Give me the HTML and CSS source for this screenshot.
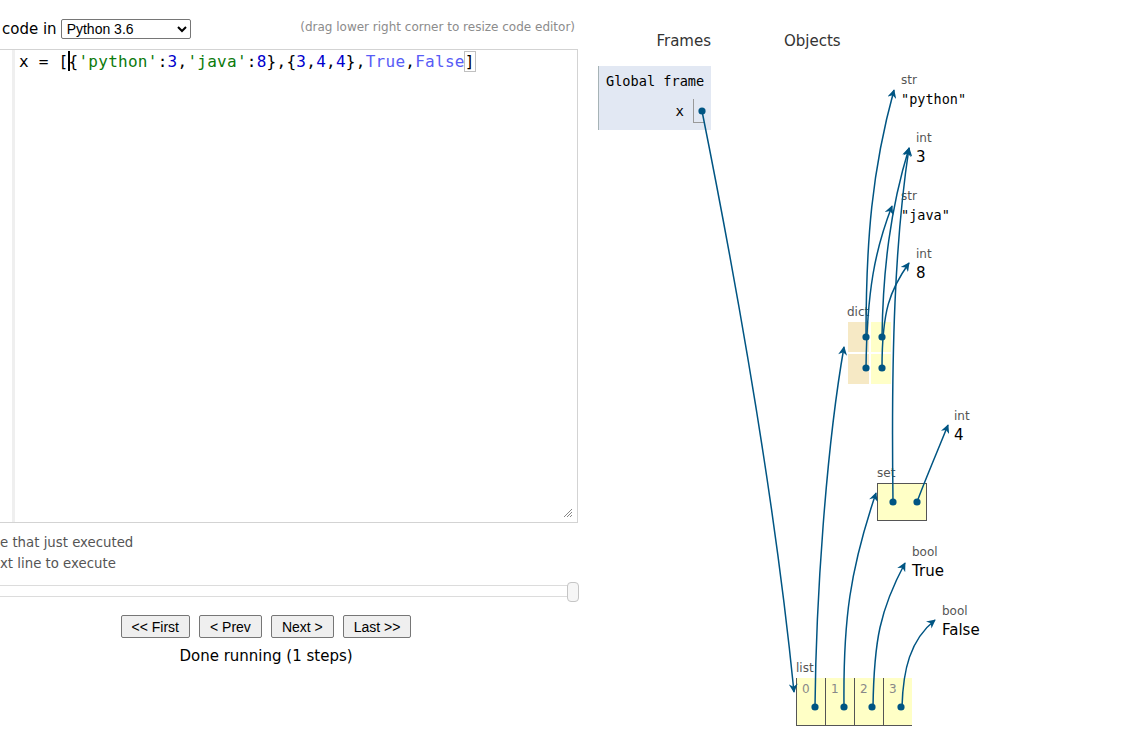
FILE: index.html
```html
<!DOCTYPE html>
<html>
<head>
<meta charset="utf-8">
<link rel="stylesheet" href="styles.css">
</head>
<body>
<div class="page">
  <section class="left">
    <div class="header">
      <label class="lang">code in
        <select class="lang-select"><option>Python 3.6</option></select>
      </label>
      <span class="hint">(drag lower right corner to resize code editor)</span>
    </div>
    <div class="editor">
      <div class="gutter"></div>
      <div class="code">
        <div class="line">x = [<span class="cursor"></span>{<span class="str">'python'</span>:<span class="num">3</span>,<span class="str">'java'</span>:<span class="num">8</span>},{<span class="num">3</span>,<span class="num">4</span>,<span class="num">4</span>},<span class="const">True</span>,<span class="const">False</span><span class="match">]</span></div>
      </div>
      <svg class="resize" width="10" height="10" viewBox="0 0 10 10">
        <line x1="9" y1="1" x2="1" y2="9" stroke="#888" stroke-width="1"/>
        <line x1="9" y1="4" x2="4" y2="9" stroke="#888" stroke-width="1"/>
        <line x1="9" y1="7" x2="7" y2="9" stroke="#888" stroke-width="1"/>
      </svg>
    </div>
    <div class="legend">
      <div class="legend-item">e that just executed</div>
      <div class="legend-item">xt line to execute</div>
    </div>
    <div class="slider"><div class="handle"></div></div>
    <div class="controls">
      <button class="btn">&lt;&lt; First</button>
      <button class="btn">&lt; Prev</button>
      <button class="btn">Next &gt;</button>
      <button class="btn">Last &gt;&gt;</button>
    </div>
    <div class="status">Done running (1 steps)</div>
  </section>

  <section class="viz">
    <div class="columns">
      <div class="stack-col">
        <div class="col-header right">Frames</div>
        <div class="frame">
          <div class="frame-title">Global frame</div>
          <div class="frame-row">
            <span class="var-name">x</span>
            <span class="var-value"></span>
          </div>
        </div>
      </div>
      <div class="heap-col">
        <div class="col-header">Objects</div>
      </div>
    </div>

    <div class="obj prim" style="left:303px;top:73px"><div class="type">str</div><div class="val mono">"python"</div></div>
    <div class="obj prim" style="left:318px;top:131px"><div class="type">int</div><div class="val">3</div></div>
    <div class="obj prim" style="left:303px;top:189px"><div class="type">str</div><div class="val mono">"java"</div></div>
    <div class="obj prim" style="left:318px;top:247px"><div class="type">int</div><div class="val">8</div></div>

    <div class="obj" style="left:249px;top:305px">
      <div class="type">dict</div>
      <div class="dict">
        <div class="dkey"></div><div class="dval"></div>
        <div class="dkey"></div><div class="dval"></div>
      </div>
    </div>

    <div class="obj prim" style="left:356px;top:409px"><div class="type">int</div><div class="val">4</div></div>

    <div class="obj" style="left:279px;top:466px">
      <div class="type">set</div>
      <div class="set"></div>
    </div>

    <div class="obj prim" style="left:314px;top:545px"><div class="type">bool</div><div class="val">True</div></div>
    <div class="obj prim" style="left:344px;top:604px"><div class="type">bool</div><div class="val">False</div></div>

    <div class="obj" style="left:198px;top:661px">
      <div class="type">list</div>
      <div class="list">
        <div class="lcell">0</div><div class="lcell">1</div><div class="lcell">2</div><div class="lcell">3</div>
      </div>
    </div>
  </section>

  <svg class="arrows" width="1123" height="752" viewBox="0 0 1123 752">
    <defs>
      <marker id="ah" viewBox="0 0 10 10" refX="9" refY="5" markerWidth="10" markerHeight="9" markerUnits="userSpaceOnUse" orient="auto">
        <path d="M0,0 L10,5 L0,10 L3,5 z" fill="#005583"/>
      </marker>
    </defs>
    <g fill="none" stroke="#005583" stroke-width="1.5" marker-end="url(#ah)">
      <path d="M702 111 C740 301, 775 502, 794 692"/>
      <path d="M866 337 C866 240, 872 170, 894 90"/>
      <path d="M866 368 C867 290, 875 250, 892 206"/>
      <path d="M882 337 C883 270, 890 210, 909 148"/>
      <path d="M882 368 C882 310, 890 290, 909 263"/>
      <path d="M893 502 C891 350, 895 240, 909 148"/>
      <path d="M917 502 C925 480, 938 450, 948 425"/>
      <path d="M815 707 C816 600, 826 450, 844 347"/>
      <path d="M844 707 C843 620, 850 570, 876 493"/>
      <path d="M873 707 C874 640, 880 610, 905 563"/>
      <path d="M902 707 C903 670, 910 640, 935 620"/>
    </g>
    <g fill="#005583">
      <circle cx="702" cy="111" r="3.6"/>
      <circle cx="866" cy="337" r="3.6"/>
      <circle cx="882" cy="337" r="3.6"/>
      <circle cx="866" cy="368" r="3.6"/>
      <circle cx="882" cy="368" r="3.6"/>
      <circle cx="893" cy="502" r="3.6"/>
      <circle cx="917" cy="502" r="3.6"/>
      <circle cx="815" cy="707" r="3.6"/>
      <circle cx="844" cy="707" r="3.6"/>
      <circle cx="872" cy="707" r="3.6"/>
      <circle cx="901" cy="707" r="3.6"/>
    </g>
  </svg>
</div>
</body>
</html>
```
FILE: styles.css
```css
html, body {
  margin: 0;
  padding: 0;
  background: #fff;
  overflow: hidden;
}
body {
  font-family: "DejaVu Sans", Verdana, sans-serif;
  color: #000;
}
.page {
  position: relative;
  display: flex;
  width: 1123px;
  height: 752px;
}

/* ---------- left column ---------- */
.left {
  flex: none;
  width: 624px;
  margin-left: -46px;
  display: flex;
  flex-direction: column;
}
.header {
  display: flex;
  justify-content: space-between;
  align-items: flex-start;
  height: 30px;
  padding-top: 19px;
  padding-left: 48px;
  padding-right: 3px;
  box-sizing: content-box;
}
.lang {
  display: flex;
  align-items: center;
  gap: 4px;
  font-size: 15px;
  height: 20px;
  color: #000;
}
.lang-select {
  width: 130px;
  height: 20px;
  font-family: "Liberation Sans", Arial, sans-serif;
  font-size: 14px;
  padding: 0 0 0 1px;
  border: 1px solid #767676;
  border-radius: 2px;
  background: #fff;
  color: #000;
}
.hint {
  font-size: 12px;
  line-height: 14px;
  margin-top: 1px;
  color: #8c8c8c;
}
.editor {
  position: relative;
  display: flex;
  height: 474px;
  box-sizing: border-box;
  border: 1px solid #d3d3d3;
}
.gutter {
  width: 57px;
  border-right: 3px solid #efefef;
  background: #fff;
}
.code {
  flex: 1;
  padding-left: 4px;
  padding-top: 1px;
}
.line {
  font-family: "DejaVu Sans Mono", Consolas, monospace;
  font-size: 16px;
  letter-spacing: 0.27px;
  line-height: 21px;
  white-space: pre;
  color: #000;
}
.str { color: #0b7a0b; }
.num { color: #0000cd; }
.const { color: #585cf6; }
.match { outline: 1px solid #c0c0c0; outline-offset: 0; }
.cursor {
  display: inline-block;
  width: 2px;
  height: 20px;
  margin: 0 -1px;
  background: #000;
  vertical-align: -4px;
}
.resize {
  position: absolute;
  right: 4px;
  bottom: 4px;
}
.legend {
  margin-top: 9px;
  font-size: 13.3px;
  line-height: 21px;
  color: #555;
}
.legend-item {
  padding-left: 46px;
}
.slider {
  position: relative;
  margin-top: 11px;
  height: 12px;
  box-sizing: border-box;
  border: 1px solid #dcdcdc;
  border-radius: 3px;
  background: #fff;
}
.handle {
  position: absolute;
  right: -2px;
  top: -4px;
  width: 12px;
  height: 20px;
  box-sizing: border-box;
  border: 1px solid #c5c5c5;
  border-radius: 4px;
  background: #f6f6f6;
}
.controls {
  display: flex;
  justify-content: center;
  gap: 9px;
  margin-top: 18px;
}
.btn {
  height: 23px;
  padding: 0 10px;
  font-family: "Liberation Sans", Arial, sans-serif;
  font-size: 14px;
  color: #000;
  background: #efefef;
  border: 1px solid #767676;
  border-radius: 2px;
}
.status {
  margin-top: 8px;
  text-align: center;
  font-size: 15px;
  line-height: 20px;
  color: #000;
}

/* ---------- visualization ---------- */
.viz {
  position: relative;
  flex: 1;
  margin-left: 20px;
}
.columns {
  display: flex;
  padding-top: 32px;
}
.stack-col {
  width: 113px;
}
.heap-col {
  margin-left: 73px;
}
.col-header {
  font-size: 15px;
  line-height: 18px;
  color: #333;
}
.col-header.right {
  text-align: right;
}
.frame {
  margin-top: 16px;
  background: #e2e8f3;
  border-left: 1px solid #a6b3b6;
  padding: 6px 7px 7px 7px;
  height: 64px;
  box-sizing: border-box;
}
.frame-title {
  font-family: "DejaVu Sans Mono", Consolas, monospace;
  font-size: 13.6px;
  line-height: 18px;
  color: #000;
  white-space: nowrap;
}
.frame-row {
  display: flex;
  justify-content: flex-end;
  align-items: center;
  gap: 9px;
  margin-top: 9px;
  height: 24px;
}
.var-name {
  font-family: "DejaVu Sans Mono", Consolas, monospace;
  font-size: 14px;
}
.var-value {
  width: 11px;
  height: 24px;
  box-sizing: border-box;
  border-left: 1px solid #999;
  border-bottom: 1px solid #999;
}

.obj {
  position: absolute;
}
.type {
  font-size: 12px;
  line-height: 14px;
  color: #555;
  margin-bottom: 3px;
}
.val {
  font-size: 15px;
  line-height: 18px;
  color: #000;
  white-space: nowrap;
}
.val.mono {
  font-family: "DejaVu Sans Mono", Consolas, monospace;
  font-size: 13.5px;
}
.dict {
  display: grid;
  grid-template-columns: 21px 20px;
  grid-template-rows: 30px 30px;
  gap: 2px;
  margin-left: 1px;
}
.dkey { background: #f6e9c5; }
.dval { background: #ffffc8; }
.set {
  width: 50px;
  height: 38px;
  box-sizing: border-box;
  border: 1px solid #555;
  background: #ffffc6;
}
.list {
  display: flex;
  border-bottom: 1px solid #555;
  width: 116px;
}
.lcell {
  width: 29px;
  height: 47px;
  box-sizing: border-box;
  border-left: 1px solid #555;
  background: #ffffc6;
  font-size: 12px;
  line-height: 14px;
  color: #888;
  padding: 4px 0 0 5px;
}

.arrows {
  position: absolute;
  left: 0;
  top: 0;
  pointer-events: none;
}
```
